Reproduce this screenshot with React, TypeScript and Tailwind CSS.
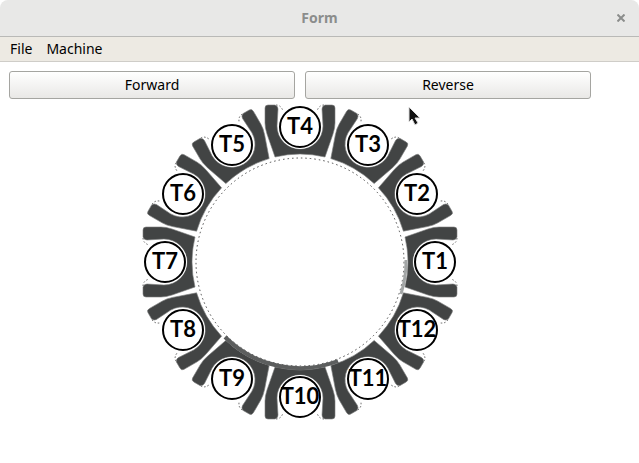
interface Pocket {
  id: number
  x: number
  y: number
  angle: number
}

const CENTER_X = 300
const CENTER_Y = 163
const POCKET_RADIUS = 135.2

// pocket 1 sits on the right, the rest follow counter clockwise
const pockets: Pocket[] = Array.from({ length: 12 }, (_, i) => {
  const rad = (-i * 30 * Math.PI) / 180
  return {
    id: i + 1,
    x: Math.round(CENTER_X + POCKET_RADIUS * Math.cos(rad)),
    y: Math.round(CENTER_Y + POCKET_RADIUS * Math.sin(rad)),
    angle: -i * 30,
  }
})

const FORK =
  "M105 -25 L128 -33 Q134 -35 139 -35 L154 -35 Q157 -35 157 -32 L157 -25 Q156 -22 153 -22 L136 -23 A23 23 0 1 0 136 23 L153 22 Q156 22 157 25 L157 32 Q157 35 154 35 L139 35 Q134 35 128 33 L105 25 A108 108 0 0 0 105 -25 Z"


function Fork({ angle }: { angle: number }) {
  return (
    <g transform={`translate(${CENTER_X} ${CENTER_Y}) rotate(${angle})`}>
      <path d={FORK} fill="#424444" stroke="#7c7e7e" strokeWidth="0.6" />
      <path
        d="M157 -24 Q157 -19 151 -17 M157 24 Q157 19 151 17"
        fill="none"
        stroke="#333"
        strokeWidth="0.7"
        strokeDasharray="1.5 2"
      />
    </g>
  )
}

function Carousel() {
  return (
    <svg className="block w-[639px] max-w-full" viewBox="0 0 639 364" role="img" aria-label="Tool carousel">
      {pockets.map((pocket) => (
        <Fork key={pocket.id} angle={pocket.angle} />
      ))}
      <circle cx={CENTER_X} cy={CENTER_Y} r="104" fill="none" stroke="#222" strokeWidth="0.8" strokeDasharray="1.5 3" />
      <path d="M406 161 A106 106 0 0 1 401 195" fill="none" stroke="#a3a6a6" strokeWidth="3" />
      <path d="M225 238 A106 106 0 0 0 338 262" fill="none" stroke="#5c5e5e" strokeWidth="4" />
      {pockets.map((pocket) => (
        <g key={pocket.id}>
          <circle cx={pocket.x} cy={pocket.y} r="22" fill="#fff" />
          <circle cx={pocket.x} cy={pocket.y} r="20" fill="#fff" stroke="#000" strokeWidth="2" />
          <text
            x={pocket.x}
            y={pocket.y + 7}
            textAnchor="middle"
            className="font-[Lato,sans-serif] text-[22px] font-bold"
          >
            T{pocket.id}
          </text>
        </g>
      ))}
    </svg>
  )
}

function Cursor() {
  return (
    <svg className="pointer-events-none absolute left-[407px] top-[105px]" width="16" height="22" viewBox="0 0 16 22" aria-hidden="true">
      <path d="M2 2 V17 L5 14 L8 20 L11 18 L8 13 H13 Z" fill="#111" stroke="#ddd" strokeWidth="1" />
    </svg>
  )
}

const buttonStyle =
  "h-7 flex-1 rounded-[3px] border border-[#a5a5a1] bg-linear-to-b from-white to-[#e9e8e6] text-sm text-black"

export default function App() {
  return (
    <div className="relative min-h-screen bg-white font-['Noto_Sans',sans-serif] text-sm text-black">
      <header className="grid h-[37px] grid-cols-[1fr_auto_1fr] items-center rounded-t-lg border-b border-[#b9b9b7] bg-[#e8e8e7] px-[10px] text-[#8b8d8c]">
        <h1 className="col-start-2 font-bold">Form</h1>
        <button type="button" aria-label="Close" className="justify-self-end p-1">
          <svg width="8" height="8" viewBox="0 0 8 8">
            <path d="M0.5 0.5 L7.5 7.5 M7.5 0.5 L0.5 7.5" stroke="currentColor" strokeWidth="2" />
          </svg>
        </button>
      </header>
      <nav className="flex h-[25px] items-center gap-[14px] border-b border-[#cfcdc8] bg-[#edeae3] px-[10px]">
        <button type="button">File</button>
        <button type="button">Machine</button>
      </nav>
      <main>
        <div className="flex gap-[10px] pl-[9px] pr-12 pt-[9px]">
          <button type="button" className={buttonStyle}>
            Forward
          </button>
          <button type="button" className={buttonStyle}>
            Reverse
          </button>
        </div>
        <Carousel />
      </main>
      <Cursor />
    </div>
  )
}
